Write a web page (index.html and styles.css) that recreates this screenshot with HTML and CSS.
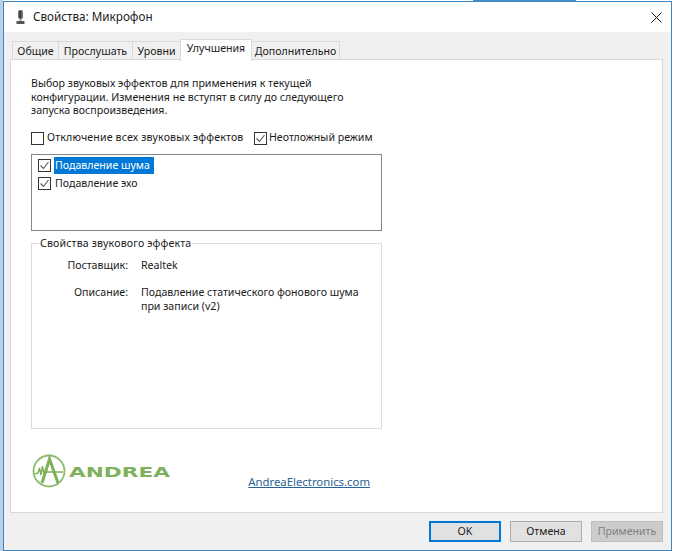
FILE: index.html
```html
<!DOCTYPE html>
<html lang="ru">
<head>
<meta charset="utf-8">
<title>Свойства: Микрофон</title>
<link rel="stylesheet" href="styles.css">
</head>
<body>
<div class="window">
  <header class="titlebar">
    <svg class="mic" width="9" height="15" viewBox="0 0 9 15"><rect x="2" y="0" width="5" height="9" rx="2" fill="#6f6f6f"/><path d="M3.500 1h1.500v7H3.500z" fill="#333"/><path d="M3.500 9h2v2h-2z" fill="#9a9a9a"/><path d="M.5 11h8v3h-8z" fill="#555"/></svg>
    <span class="title">Свойства: Микрофон</span>
    <svg class="close" width="11" height="11" viewBox="0 0 11 11"><path d="M.5.500l10 10M10.500.500l-10 10" stroke="#111" stroke-width="1" fill="none"/></svg>
  </header>
  <main class="body">
    <nav class="tabs">
      <span class="tab t1">Общие</span>
      <span class="tab t2">Прослушать</span>
      <span class="tab t3">Уровни</span>
      <span class="tab active">Улучшения</span>
      <span class="tab t5">Дополнительно</span>
    </nav>
    <section class="panel">
      <p class="intro">Выбор звуковых эффектов для применения к текущей<br>конфигурации. Изменения не вступят в силу до следующего<br>запуска воспроизведения.</p>
      <div class="options">
        <label class="opt first"><span class="cb"></span>Отключение всех звуковых эффектов</label>
        <label class="opt second"><span class="cb"><svg viewBox="0 0 11 11"><path d="M1.500 5.500l3 3 5-6.500" fill="none" stroke="#555" stroke-width="1.100"/></svg></span>Неотложный режим</label>
      </div>
      <div class="list">
        <div class="row"><span class="cb"><svg viewBox="0 0 11 11"><path d="M1.500 5.500l3 3 5-6.500" fill="none" stroke="#555" stroke-width="1.100"/></svg></span><span class="item selected">Подавление шума</span></div>
        <div class="row"><span class="cb"><svg viewBox="0 0 11 11"><path d="M1.500 5.500l3 3 5-6.500" fill="none" stroke="#555" stroke-width="1.100"/></svg></span><span class="item">Подавление эхо</span></div>
      </div>
      <fieldset class="group">
        <legend>Свойства звукового эффекта</legend>
        <dl class="props">
          <dt>Поставщик:</dt><dd>Realtek</dd>
          <dt>Описание:</dt><dd>Подавление статического фонового шума<br>при записи (v2)</dd>
        </dl>
      </fieldset>
      <div class="brand">
        <svg class="logo" width="140" height="34" viewBox="0 0 140 34">
          <circle cx="17" cy="17" r="15.500" fill="none" stroke="#8dbb6c" stroke-width="1.800"/>
          <path d="M10 29L17.500 5 26 29" fill="none" stroke="#7fb05c" stroke-width="3"/>
          <path d="M3 20l3-1 1.500-5 1.500 7 1.500-9 1.500 9 2-6 1 3h16" fill="none" stroke="#7fb05c" stroke-width="1.500"/>
          <text class="logotext" x="37" y="23" textLength="101" lengthAdjust="spacingAndGlyphs">ANDREA</text>
        </svg>
        <a class="link" href="#">AndreaElectronics.com</a>
      </div>
    </section>
  </main>
  <footer class="footer">
    <button class="btn default">OK</button>
    <button class="btn">Отмена</button>
    <button class="btn disabled">Применить</button>
  </footer>
</div>
</body>
</html>
```

FILE: styles.css
```css
* { box-sizing: border-box; }
html, body { margin: 0; height: 100%; }
body { padding: 1px 2px 0 3px; font: 10.6px/13.500px "Noto Sans", sans-serif; color: #1a1a1a; overflow: hidden;
  background: linear-gradient(#3f8fd0, #3f8fd0) 473px 0 / 103px 1px no-repeat, linear-gradient(90deg, #b9d0e6 3px, #fff 3px); }
.window { height: 550px; border: 1px solid #3c88c4; display: flex; flex-direction: column; background: #f0f0f0; }
.titlebar { height: 30px; flex: none; background: #fff; display: flex; align-items: center; padding: 0 9px 0 12px; }
.mic { margin-right: 8px; }
.title { font-size: 11.700px; flex: 1; }
.body { flex: 1; padding: 8px 8px 0 6px; display: flex; flex-direction: column; min-height: 0; }
.tabs { display: flex; height: 20px; align-items: flex-end; position: relative; z-index: 1; margin-bottom: -1px; padding-left: 2px; }
.tab { height: 19px; border: 1px solid #d9d9d9; border-left-width: 0; background: #f0f0f0; white-space: nowrap; text-align: center; padding-top: 3px; }
.t1 { border-left-width: 1px; width: 47px; }
.t2 { width: 74px; }
.t3 { width: 48px; }
.active { width: 72px; height: 22px; margin-bottom: -1px; padding-top: 2px; background: #fff; border-bottom: 0; border-left-width: 1px; margin-left: -1px; }
.t5 { width: 88px; }
.panel { height: 454px; background: #fff; border: 1px solid #d9d9d9; padding: 17px 20px 0 20px; display: flex; flex-direction: column; }
.intro { margin: 0; }
.options { display: flex; margin-top: 13px; height: 15px; align-items: center; }
.opt { display: flex; align-items: center; gap: 3px; white-space: nowrap; }
.first { width: 223px; letter-spacing: .15px; }
.second { gap: 2px; }
.cb { width: 13px; height: 13px; border: 1px solid #333; background: #fff; flex: none; display: block; }
.cb svg { display: block; width: 11px; height: 11px; }
.list { width: 351px; height: 77px; margin-top: 8px; border: 1px solid #828790; padding: 2px 0 0 6px; }
.row { display: flex; align-items: center; height: 18px; gap: 3px; }
.item { padding: 0 1px; line-height: 17px; white-space: nowrap; }
.selected { background: #0078d7; color: #fff; width: 100px; }
.group { width: 351px; height: 192px; margin: 6px 0 0; border: 1px solid #dcdcdc; padding: 0; min-width: 0; }
.group legend { padding: 0 1px; margin-left: 7px; letter-spacing: .15px; }
.props { margin: 9px 0 0; display: grid; grid-template-columns: 97px 1fr; column-gap: 12px; row-gap: 13.500px; }
.props dt { text-align: right; padding-right: 1px; }
.props dd { margin: 0; }
.brand { display: flex; align-items: flex-end; justify-content: space-between; width: 339px; margin-top: 25px; }
.logo { display: block; margin-left: 1px; }
.logotext { font: bold 14px "DejaVu Sans", sans-serif; fill: #7fb05c; }
.link { color: #2a6496; text-decoration: underline; font-size: 11.350px; line-height: 14px; margin-bottom: -1px; }
.footer { flex: none; display: flex; justify-content: flex-end; gap: 9px; padding: 8px 8px 0 0; height: 37px; }
.btn { width: 72px; height: 21px; border: 1px solid #adadad; background: #e1e1e1; font: inherit; color: #1a1a1a; padding: 0; }
.default { border: 2px solid #0078d7; }
.disabled { background: #cccccc; border-color: #bfbfbf; color: #808080; }
```
